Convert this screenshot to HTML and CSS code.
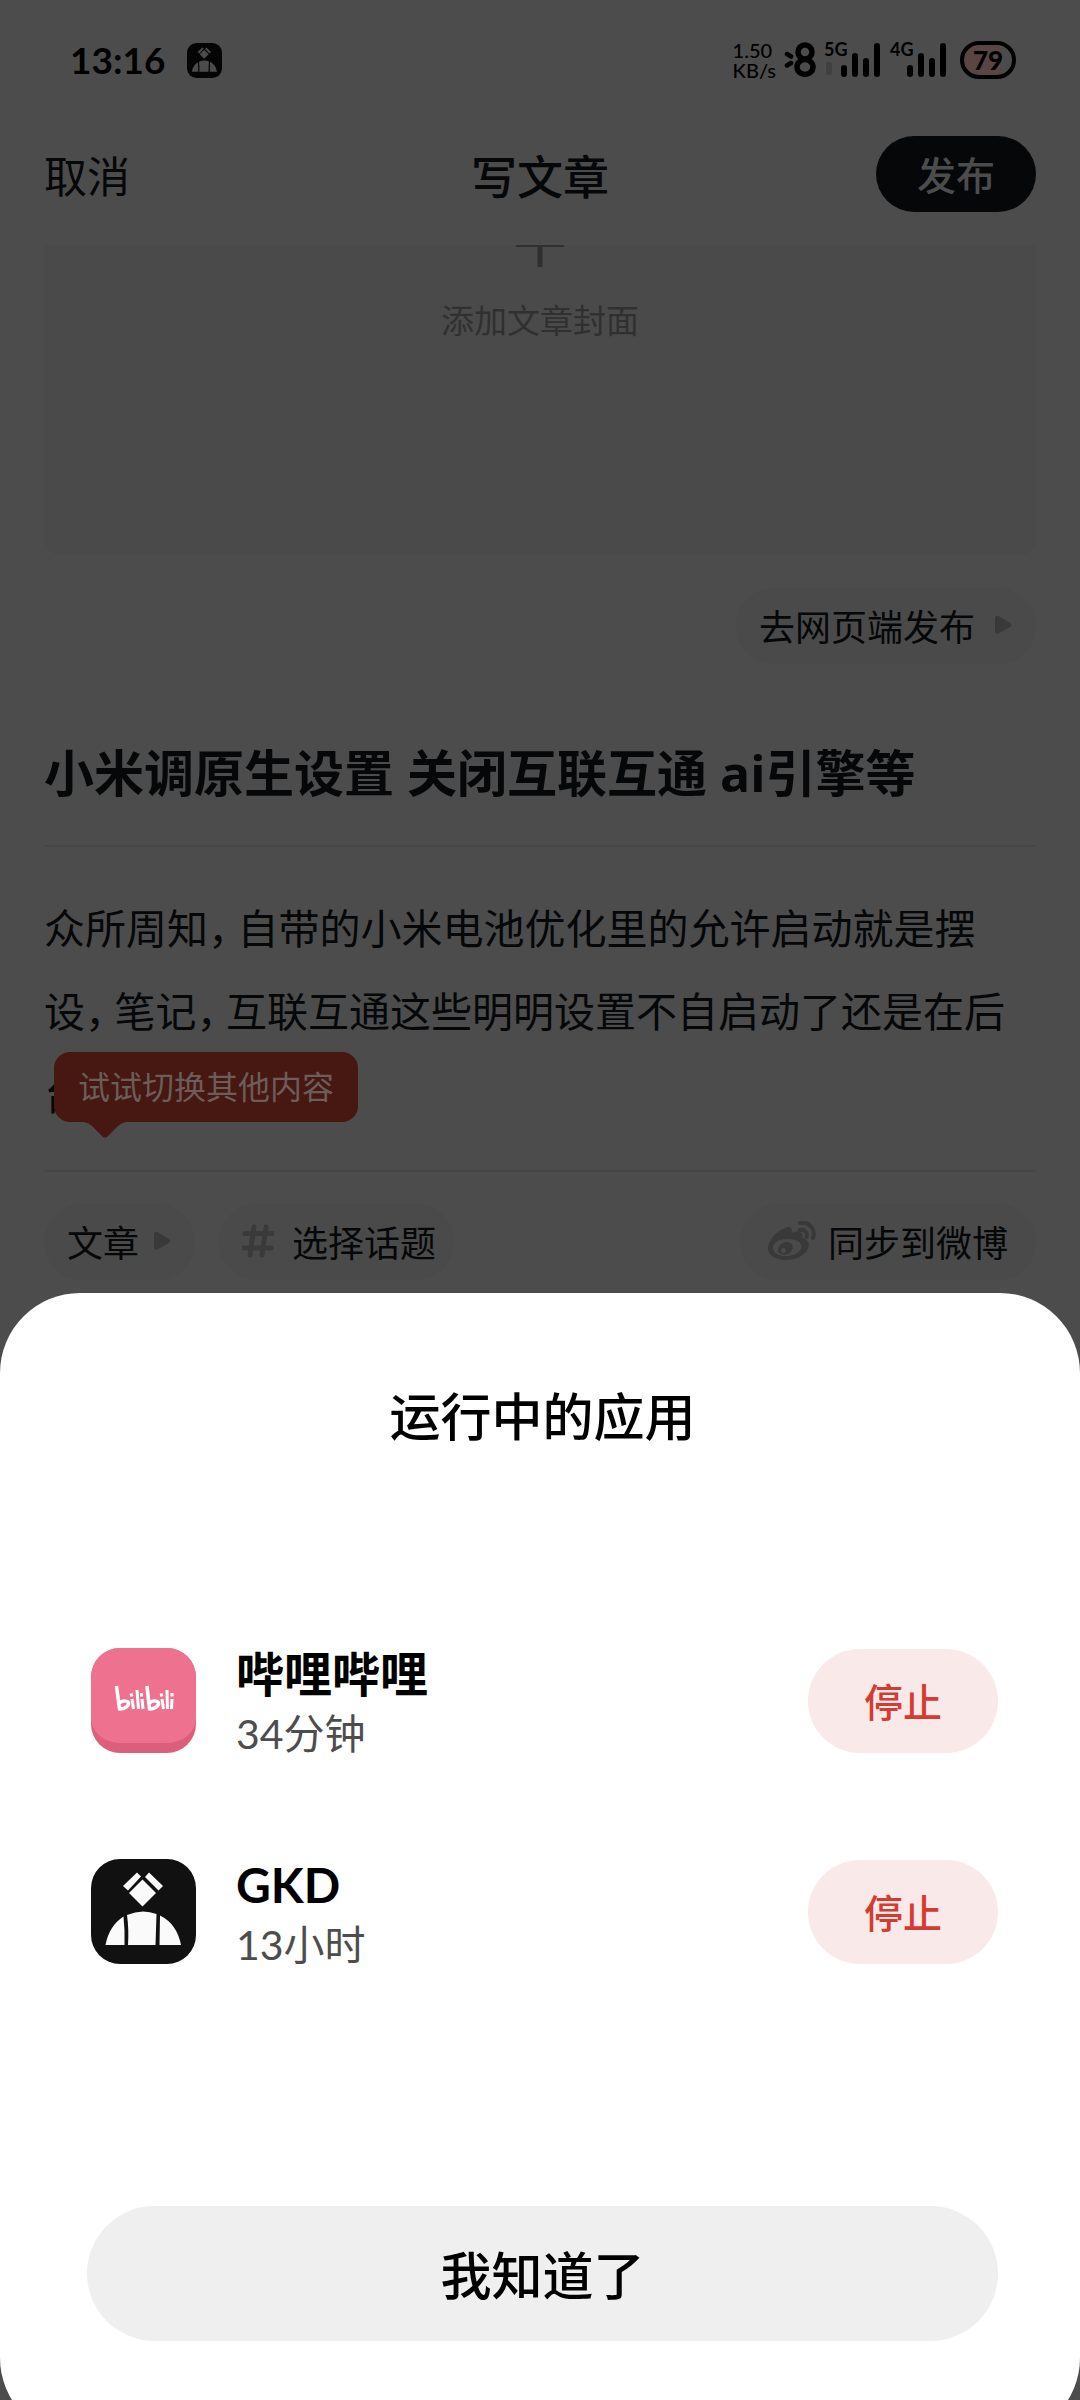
FILE: index.html
```html
<!DOCTYPE html>
<html lang="zh-CN">
<head>
<meta charset="utf-8">
<meta name="viewport" content="width=device-width, initial-scale=1">
<title>写文章</title>
<link rel="stylesheet" href="styles.css">
</head>
<body>
<svg class="defs" aria-hidden="true">
  <symbol id="gkd" viewBox="0 0 105 105">
    <rect class="gkd-bg" width="105" height="105" rx="29"/>
    <g class="gkd-fg">
      <path d="M51.500 20.500 L65 34 L51.500 47.500 L38 34Z"/>
      <path d="M46 13.500 L50 17.500 L37 31.500 L32 27Z"/>
      <path d="M58 13.500 L72 27 L67.500 31.500 L54 18Z"/>
      <path d="M32.500 57.500 Q34 71 33.500 86 H14.500 Q18 67 32.500 57.500Z"/>
      <path d="M36 56 Q51 49.500 65.500 55 L64.500 86 H37 Q38 70 36 56Z"/>
      <path d="M69 56.500 Q86 65 90 86 H68.500Z"/>
    </g>
  </symbol>
  <symbol id="tri" viewBox="0 0 17 20">
    <path d="M0 3.500 Q0 0 3.500 1 L15 8 Q18 10 15 12 L3.500 18.500 Q0 20 0 16.500Z"/>
  </symbol>
</svg>

<div class="page">
  <div class="status">
    <div class="status-left">
      <span class="clock">13:16</span>
      <svg class="status-app"><use href="#gkd"/></svg>
    </div>
    <div class="status-right">
      <span class="speed">1.50<br>KB/s</span>
      <svg class="eight" viewBox="0 0 32 36" aria-hidden="true">
        <g fill="none" stroke="#000" stroke-linecap="round">
          <ellipse cx="21" cy="10" rx="7" ry="7" stroke-width="5.500"/>
          <ellipse cx="21" cy="25" rx="8" ry="7.500" stroke-width="5.500"/>
          <path d="M3 12 L7 14.500 M3 23.500 L7 21" stroke-width="4.500"/>
        </g>
      </svg>
      <svg class="signal" viewBox="0 -6 56 48" role="img" aria-label="5G">
        <text x="0" y="14">5G</text>
        <g stroke-width="6" stroke-linecap="round" stroke="#000">
          <path stroke="#404040" d="M5 23V30"/>
          <path d="M20 26V32M31 14V32M42 19V32M53 4V32"/>
        </g>
      </svg>
      <svg class="signal" viewBox="0 -6 56 48" role="img" aria-label="4G">
        <text x="0" y="14">4G</text>
        <path stroke-width="6" stroke-linecap="round" stroke="#000" d="M20 26V32M31 14V32M42 19V32M53 4V32"/>
      </svg>
      <span class="battery">79</span>
    </div>
  </div>

  <header class="topbar">
    <button class="cancel" type="button">取消</button>
    <h1 class="heading">写文章</h1>
    <button class="publish" type="button">发布</button>
  </header>

  <main class="content">
    <button class="cover" type="button">
      <svg class="plus" viewBox="0 0 48 22" aria-hidden="true"><path d="M0 0H48V2H26.500V22H21.500V2H0Z"/></svg>
      <span>添加文章封面</span>
    </button>
    <div class="web-row">
      <a class="chip" href="#web">去网页端发布<svg class="tri tri-wide"><use href="#tri"/></svg></a>
    </div>
    <input class="title" type="text" aria-label="标题" value="小米调原生设置 关闭互联互通 ai引擎等">
    <div class="editor" role="textbox" aria-multiline="true" aria-label="正文" contenteditable="true" spellcheck="false">众所周知<span class="comma">，</span>自带的小米电池优化里的允许启动就是摆设<span class="comma">，</span>笔记<span class="comma">，</span>互联互通这些明明设置不自启动了还是在后台</div>
    <div class="tools">
      <div class="tip">试试切换其他内容
        <svg class="tip-tail" viewBox="0 0 42 16" aria-hidden="true"><path d="M0 0 Q5 1 8 4 L18 14 Q21 17 24 14 L34 4 Q37 1 42 0Z"/></svg>
      </div>
      <button class="chip" type="button">文章<svg class="tri"><use href="#tri"/></svg></button>
      <button class="chip chip-topic" type="button">
        <svg class="hash" viewBox="0 0 32 34" aria-hidden="true"><path d="M12 3 L8 31 M24 3 L20 31 M3 9.500 H30 M2 24 H29"/></svg>选择话题</button>
      <button class="chip chip-weibo" type="button">
        <svg class="weibo" viewBox="0 0 48 40" aria-hidden="true">
          <path fill-rule="evenodd" d="M17 7 C22 4.500 25 7 23.500 12 C30 9 36 10 34.500 17 C40 19 42 22 40 27 C37 35 28 39 18 39 C7 39 0 34 0 27 C0 19 9 10 17 7Z M19 18 C9 18 4.500 23 5 28 C6 33 12 35.500 19 35 C28 34.500 34 30 33.500 25 C33 20.500 27 18 19 18Z"/>
          <path fill-rule="evenodd" d="M18 21 C24 21 26 25 24 29 C22 33 17 35 13 33 C9 31 9 27 12 24 C14 22 16 21 18 21Z M15.500 27 A2.500 2.500 0 1 0 15.600 27Z"/>
          <path class="wave" d="M32 2 C41 0 48 8 45 17 M32 9 C37 8 40 12 38.500 16"/>
        </svg>同步到微博</button>
    </div>
  </main>
</div>

<section class="sheet" role="dialog" aria-labelledby="sheet-title">
  <h2 class="sheet-title" id="sheet-title">运行中的应用</h2>
  <ul class="apps">
    <li class="app">
      <svg class="app-icon" viewBox="0 0 105 105" aria-label="bilibili" role="img">
        <rect width="105" height="105" rx="29" fill="#db5f7b"/>
        <path fill="#ee728f" d="M29 0H76A29 29 0 0 1 105 29V70A29 25 0 0 1 76 95H29A29 25 0 0 1 0 70V29A29 29 0 0 1 29 0Z"/>
        <g fill="none" stroke="#fff" stroke-width="3.500" stroke-linejoin="round">
          <path d="M25.500 38 L28.500 61 C35 61 39 56.500 37 54 C35 52 31 53 28 55"/>
          <path d="M56 38 L58.500 61 C65 61 69 56.500 67 54 C65 52 61 53 58 55"/>
          <path stroke-width="3" d="M41 51 L42.500 61 M46 42 L47.500 61 M51 51 L52 61 M71 51 L72.500 61 M76 42 L76.500 61 M81 51 L80.500 61 M40 45.500 L41 48.500 M50.500 45 V48.500 M70 45.500 L71 48.500 M81 45 V48.500"/>
        </g>
      </svg>
      <div class="app-text">
        <span class="app-name">哔哩哔哩</span>
        <span class="app-time">34分钟</span>
      </div>
      <button class="stop" type="button">停止</button>
    </li>
    <li class="app">
      <svg class="app-icon" aria-hidden="true"><use href="#gkd"/></svg>
      <div class="app-text">
        <span class="app-name">GKD</span>
        <span class="app-time">13小时</span>
      </div>
      <button class="stop" type="button">停止</button>
    </li>
  </ul>
  <button class="ok" type="button">我知道了</button>
</section>
</body>
</html>
```
FILE: styles.css
```css
* { box-sizing: border-box; }

html, body { height: 100%; }

body {
  margin: 0;
  overflow: hidden;
  background: #4c4c4c;
  color: #050709;
  font-family: Lato, "Noto Sans CJK SC", sans-serif;
}

button, input {
  margin: 0;
  padding: 0;
  border: 0;
  background: none;
  color: inherit;
  font-family: inherit;
}

.defs { display: none; }
.gkd-bg { fill: #111; }
.gkd-fg { fill: #fafafa; }

/* status bar */
.status {
  display: flex;
  justify-content: space-between;
  align-items: center;
  height: 120px;
  padding: 0 64px 0 70px;
  color: #000;
}

.status-left, .status-right {
  display: flex;
  align-items: center;
}

.status-left { gap: 22px; }

.clock {
  font-size: 37px;
  font-weight: 700;
  line-height: 40px;
}

.status-app {
  width: 35px;
  height: 35px;
  filter: brightness(0.3);
}

.speed {
  margin-right: 8px;
  font-size: 20px;
  font-weight: 500;
  line-height: 20px;
}

.eight {
  width: 32px;
  height: 36px;
  margin-right: 8px;
}

.signal {
  width: 56px;
  height: 48px;
  margin-right: 10px;
}

.signal text {
  font-size: 18px;
  font-weight: 700;
}

.battery {
  width: 56px;
  height: 38px;
  margin-left: 4px;
  border: 4px solid #000;
  border-radius: 19px;
  background: linear-gradient(90deg, #5a4545 80%, #4c4c4c 80%);
  font-size: 26px;
  font-weight: 900;
  line-height: 30px;
  text-align: center;
}

/* top bar */
.topbar {
  display: grid;
  grid-template-columns: 1fr auto 1fr;
  align-items: center;
  height: 108px;
  padding: 0 44px;
}

.cancel {
  justify-self: start;
  font-size: 43px;
}

.heading {
  margin: 0;
  font-size: 46px;
  font-weight: 500;
}

.publish {
  justify-self: end;
  width: 160px;
  height: 76px;
  padding-bottom: 2px;
  border-radius: 38px;
  background: #050709;
  color: #4c4c4c;
  font-size: 39px;
  font-weight: 500;
}

/* article form */
.content {
  display: flex;
  flex-direction: column;
  padding: 17px 44px 0;
}

.cover {
  display: flex;
  flex-direction: column;
  align-items: center;
  gap: 28px;
  height: 310px;
  border-radius: 0 0 18px 18px;
  background: #4a4a4a;
  color: #303030;
  font-size: 33px;
}

.plus {
  width: 48px;
  height: 22px;
  fill: #303030;
}

.web-row {
  display: flex;
  justify-content: flex-end;
  padding: 33px 0;
}

.chip {
  display: flex;
  align-items: center;
  height: 76px;
  padding: 0 24px 2px 23px;
  border-radius: 38px;
  background: #4a4a4a;
  color: inherit;
  font-size: 36px;
  text-decoration: none;
}

.tri {
  width: 17px;
  height: 20px;
  margin-left: 15px;
  fill: #393939;
}

.tri-wide { margin-left: 20px; }

.title {
  width: 100%;
  height: 150px;
  padding-bottom: 2px;
  border-bottom: 2px solid #464646;
  font-family: "Open Sans", "Noto Sans CJK SC", sans-serif;
  font-size: 50px;
  font-weight: 700;
}

.editor {
  height: 325px;
  padding-top: 40px;
  border-bottom: 2px solid #464646;
  font-size: 41px;
  line-height: 83px;
  outline: none;
}

/* Running commas take less than a full em. */
.comma {
  padding-right: 9px;
  font-feature-settings: "halt";
}

.tools {
  position: relative;
  display: flex;
  gap: 24px;
  padding-top: 32px;
}

.chip-topic { padding-right: 18px; }

.hash {
  width: 32px;
  height: 34px;
  margin-right: 18px;
  fill: none;
  stroke: #3a3a3a;
  stroke-width: 5;
  stroke-linecap: round;
}

.chip-weibo {
  margin-left: auto;
  padding-right: 28px;
  padding-left: 28px;
}

.weibo {
  width: 48px;
  height: 40px;
  margin-right: 12px;
  fill: #393939;
}

.wave {
  fill: none;
  stroke: #393939;
  stroke-width: 4;
  stroke-linecap: round;
}

.tip {
  position: absolute;
  bottom: 158px;
  left: 10px;
  height: 70px;
  padding: 0 24px;
  border-radius: 16px;
  background: #471711;
  color: #6c5d5b;
  font-size: 32px;
  line-height: 70px;
  white-space: nowrap;
}

.tip-tail {
  position: absolute;
  top: 100%;
  left: 30px;
  width: 42px;
  height: 16px;
  fill: #471711;
}

/* bottom sheet */
.sheet {
  position: fixed;
  right: 0;
  bottom: -38px;
  left: 0;
  display: flex;
  flex-direction: column;
  padding: 88px 82px 97px 87px;
  border-radius: 80px;
  background: #fff;
  color: #000;
}

.sheet-title {
  margin: 0;
  font-size: 51px;
  font-weight: 500;
  line-height: 72px;
  text-align: center;
}

.apps {
  display: flex;
  flex-direction: column;
  gap: 106px;
  margin: 0;
  padding: 195px 0 242px 4px;
  list-style: none;
}

.app {
  display: flex;
  align-items: center;
  height: 105px;
}

.app-icon {
  width: 105px;
  height: 105px;
  margin-right: 40px;
}

.app-text {
  display: flex;
  flex: 1;
  flex-direction: column;
  padding-top: 6px;
}

.app-name {
  font-size: 48px;
  font-weight: 700;
  line-height: 60px;
}

.app-time {
  color: #4d4d4d;
  font-size: 41px;
  line-height: 60px;
}

.stop {
  width: 190px;
  height: 104px;
  padding-bottom: 2px;
  border-radius: 52px;
  background: #fae9e9;
  color: #d43b32;
  font-size: 39px;
  font-weight: 500;
}

.ok {
  height: 135px;
  padding-bottom: 2px;
  border-radius: 68px;
  background: #efefef;
  font-size: 51px;
  font-weight: 500;
}
```
